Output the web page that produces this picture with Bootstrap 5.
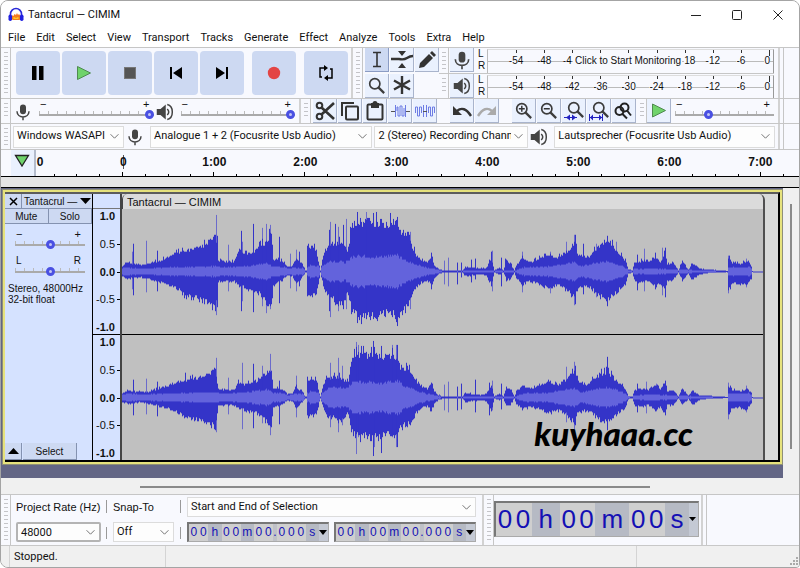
<!DOCTYPE html>
<html lang="en">
<head>
<meta charset="utf-8">
<meta name="viewport" content="width=device-width, initial-scale=1">
<title>Tantacrul — CIMIM</title>
<link href="https://cdn.jsdelivr.net/npm/bootstrap@5.3.0/dist/css/bootstrap.min.css" rel="stylesheet">
<style>
:root{--tile:#cdd9f2;--tool:#eaf1fe;--bar:#f8f9fe;--line:#c6c6c6;--ui:Roboto,"Open Sans",sans-serif;--ari:"Liberation Sans",Arial,sans-serif}
html{background:#fff}
body{font:11px/16px var(--ui);color:#111;background:#fff}
button,input,select{font:inherit;color:inherit}
button{border:0;padding:0;background:none}
svg{display:block;flex:none}
.win{border:1px solid #a4a4a4;border-radius:8px 8px 4px 8px;overflow:hidden;background:#f0f0f0}
.titlebar{height:27px;background:#fff;padding:0 15px 0 7px}
.titlebar h1{font-size:11px;line-height:16px;margin:0;font-weight:400}
.wbtns{gap:29px}
.menus{height:19px;background:#fff;padding:0 7px;gap:11px}
.menus a{color:#111;text-decoration:none;line-height:19px}
.trow{background:var(--bar);border-top:1px solid var(--line)}
.r1{height:51px}.r2{height:25px}.r3{height:26px}
.grip{flex:none;width:10px;border-right:1px solid var(--line);padding:4px 2px 4px 3px}
.grip::before{content:"";display:block;height:100%;background:repeating-linear-gradient(#c4c4c8 0 1px,transparent 1px 4px)}
.sep{border-left:2px solid #d2d2d2}
.deck{padding:0 3px 0 5px}
.keys{gap:2px}
.big{width:44px;height:44px;background:var(--tile);border-radius:4px}
.tool{width:24px;height:24px;background:var(--tool);border-right:1px solid #a9b4cc;border-bottom:1px solid #a9b4cc;flex:none}
.tool.on{background:var(--tile);border-color:#8b9cc4}
.toolgrid{display:grid;grid-template-columns:repeat(3,24px);gap:1px;padding:0 0 0 2px}
.tail{width:16px;border-left:1px solid var(--line);margin-left:3px;flex:none}
.meter{height:25px;gap:1px}
.meter + .meter{border-top:1px solid var(--line)}
.lr{font:10px/12px var(--ari);width:11px;padding-left:3px}
.scale{font:10px/12px var(--ari);padding-left:14px;margin:1px 0 0;border-left:1px solid #bbb;border-top:1px solid #ddd;border-right:1px solid #999;background:linear-gradient(#bbb,#bbb) 0 11px/100% 1px no-repeat}
.scale span{flex:1 1 0;text-align:center;position:relative;padding-top:5px}
.scale span::before{content:"";position:absolute;top:0;left:50%;width:1px;height:3px;background:#333}
.scale b{font-weight:400;background:var(--bar)}
.scale .cut-end b{margin-right:10px}
.scale .cut-start b{margin-left:10px}
.scale span:last-child{flex:0 0 18px;text-align:right;padding-right:3px}
.scale span:last-child::before{left:14px;height:6px}
.hint{position:absolute;left:86px;top:6px;padding:0 1px 0 2px;background:var(--bar);font:10px/13px var(--ari);white-space:nowrap}
.slide{font:11px/8px var(--ari);padding-top:1px}
.slide .ends{padding:0 4px 0 1px;height:8px}
input[type=range]{appearance:none;-webkit-appearance:none;display:block;width:100%;height:10px;margin:0;background:linear-gradient(#aaa,#aaa) 0 6px/100% 2px no-repeat,repeating-linear-gradient(90deg,#bbb 0 1px,transparent 1px 9px) 0 3px/100% 4px no-repeat}
input[type=range]::-webkit-slider-thumb{-webkit-appearance:none;width:9px;height:9px;border:3px solid #4a50e2;border-radius:50%;background:#c2c6f4;margin-top:2px}
.mixer{flex:none;width:284px;padding-left:1px}
.mixer svg{margin:4px 7px 0 2px}
.mixer .slide{flex:1 1 0}
.mixer input{min-width:0}
.edits{flex:none;gap:1px;padding:0 1px 0 2px}
.undo{margin-left:12px}
.speed{flex:1 1 0;min-width:0}
.devs{gap:2px;padding:0 3px 0 2px}
.form-select{background-image:url("data:image/svg+xml,%3csvg xmlns='http://www.w3.org/2000/svg' viewBox='0 0 16 16'%3e%3cpath fill='none' stroke='%23666' stroke-width='1.6' d='m1 4 7 7 7-7'/%3e%3c/svg%3e")}
.picks .form-select,.foot .form-select{font:11px/18px var(--ui);padding:0 16px 1px 3px;height:22px;border:1px solid #dcdcdc;border-radius:0;background-color:#fdfdfd;background-size:9px;background-position:right 4px center;min-width:0;color:#111}
.w-host{flex:0 0 111px}.w-rec{flex:226 1 0}.w-chan{flex:149 1 0}.w-play{flex:224 1 0}
.timeline{background:var(--bar);border-top:1px solid var(--line);border-bottom:1px solid #000;height:28px;font:bold 12px/14px var(--ari)}
.pin{width:25px;background:var(--tool);border-right:2px solid #b4bccc}
.zero{flex:none;padding:5px 0 0 1px;width:42px}
.hours{flex:none;padding-top:5px}
.hours span{flex:0 0 91px;text-align:center}
.hours span:first-child{background:linear-gradient(#555,#555) 45px 0/1px 100% no-repeat}
.strip{height:11px;background:#e4e4e4;border-bottom:1px solid #000}
.stage{min-height:0}
.lane{background:#636685;padding:2px 1px 14px 2px}
.track{border:2px solid #e6e27c;box-shadow:0 0 0 1px #8f8f78}
.inner{border-top:2px solid #5c5c5c;border-right:2px solid #000;border-bottom:2px solid #000;background:#d9dad9}
.panel{flex:0 0 88px;min-width:0;background:#d5e2ff;border-right:1px solid #000;font:10px/11px var(--ari)}
.panel button{background:var(--tile);border-right:1px solid #8492b0;border-bottom:1px solid #8492b0;height:15px}
.panel .close{width:17px;flex:none}
.panel .name{min-width:0;text-align:left;padding:0 1px 0 2px;border-right:0}
.panel .slide{width:70px;margin:5px 0 0 10px}
.panel .slide.pan{margin-top:8px}
.pan .ends{font-size:10px}
.panel .info{margin:8px 0 0 3px;white-space:nowrap}
.panel .low{height:17px}
.sel{width:54px;margin-left:1px}
.vr-col{flex:0 0 29px;background:#d5e2ff;border-right:2px solid #444;font:11px/13px var(--ari)}
.vr-head{height:15px;border-bottom:1px solid #777}
.vr-ch{flex:1 1 0;text-align:right;padding:1px 5px 0 0}
.vr-ch + .vr-ch{border-top:1px solid #000}
.vr-ch span{position:relative}
.vr-ch span::after{content:"";position:absolute;right:-5px;top:6px;width:3px;height:1px;background:#000}
.clip{border-right:2px solid #4f4f4f;border-radius:5px 6px 0 0;background:#c0c0c0;position:relative;margin-right:13px;overflow:hidden}
.cliphead{height:15px;background:#dbdbdb;font:11px/16px var(--ari);padding-left:4px;border-left:1px solid #444;border-radius:5px 0 0 0}
.wave{flex:1 1 0;min-height:0;width:100%}
.wave + .wave{border-top:1px solid #000}
.water{position:absolute;right:70px;bottom:9px;font:italic 900 33px/36px Lato,sans-serif;color:#000}
.vbar{width:16px;background:#f0f0f0;padding:16px 0 29px}
.vbar i{display:block;width:2px;height:100%;margin-left:7px;background:#8a8a8a}
.hbar{height:16px;padding:8px 149px 0 139px;background:#f0f0f0}
.hbar i{display:block;height:2px;background:#8a8a8a}
.foot{background:var(--bar);border-top:1px solid var(--line);height:51px}
.foot label{font:11px/20px var(--ari)}
.fcol{padding:2px 0 3px;gap:5px}
.fcol .form-select{height:20px;line-height:17px}
.fcol .form-select.rate{border:2px solid #b4b4b4;border-radius:2px}
.rcol{width:95px;padding-left:5px;padding-right:5px}
.scol{width:73px;padding-left:6px;padding-right:6px}
.tcol{flex:0 1 301px;padding-left:6px;padding-right:6px}
.bars{width:1px;gap:14px;padding:5px 0 6px}
.bars i{flex:1;background:#999}
.times{gap:5px}
.digits{border:1px solid #aaa;border-top:2px solid #777;border-left:2px solid #777;background:#b6bac4;color:#1410b4;font:12px/17px var(--ari);height:20px}
.digits span{background:#cfcfcf;text-align:center;flex:10 1 0;min-width:0}
.digits .u{background:#b6bac4;flex-grow:14}
.digits .d{background:#bfc1c8;flex-grow:4}
.digits button{width:9px;color:#000;flex:none;background:#c4c9d4}
.bigtime{padding:6px 2px 0 0}
.digits.huge{height:36px;width:205px;font-size:26px;line-height:33px}
.digits.huge span{flex-grow:18}
.digits.huge .u{flex-grow:28}
.digits.huge .wide{flex-grow:34}
.digits.huge .slim{flex-grow:24}
.status{height:22px;border-top:1px solid #c8c8c8;background:#f0f0f0}
.status div{line-height:22px;border-left:1px solid #d4d4d4;padding-left:4px}
.status .st1{width:156px;margin-left:8px}
.status .st3{width:163px;padding:0 0 1px}
</style>
<script src="https://cdn.jsdelivr.net/npm/bootstrap@5.3.0/dist/js/bootstrap.bundle.min.js"></script>
</head>
<body>
<svg width="0" height="0" class="position-absolute" aria-hidden="true">
<symbol id="mic" viewBox="0 0 24 24"><rect x="8" y="2" width="8" height="13" rx="4" fill="#444"/><path d="M4 11c0 10 16 10 16 0M12 18v5" fill="none" stroke="#444" stroke-width="2"/></symbol>
<symbol id="spk" viewBox="0 0 24 24"><path d="M1 8h5l7-6v20l-7-6H1z" fill="#444"/><path d="M15 8q4 4 0 8M15 2c9 2 9 18 0 20" fill="none" stroke="#444" stroke-width="2"/></symbol>
<symbol id="play" viewBox="0 0 16 16"><path d="M1.500 1.500L14.500 8L1.500 14.500z" fill="#6fd36b" stroke="#4f8a50"/></symbol>
<symbol id="lens" viewBox="0 0 20 20"><circle cx="8" cy="8" r="6" fill="none" stroke="#3c3c3c" stroke-width="2"/><path d="M12.500 12.500L19 19" stroke="#3c3c3c" stroke-width="2.600"/></symbol>
</svg>
<div class="win d-flex flex-column min-vh-100">
<header class="titlebar d-flex align-items-center">
<svg width="16" height="16" viewBox="0 0 16 16"><path d="M2.500 9V7a5.500 5.500 0 0 1 11 0v2" fill="none" stroke="#2a2ad8" stroke-width="1.600"/><path d="M3.500 11l1-3 1 1 1-2 1.500 1 1-2 1 2 1-1 1.500 2v3l-1 1H4.500z" fill="#f47b20"/><path d="M5 11l1-1 2 1 2-1 1 1-1 1H6z" fill="#ffc928"/><rect x=".5" y="7.500" width="3.500" height="6.500" rx="1.700" fill="#2020e0"/><rect x="12" y="7.500" width="3.500" height="6.500" rx="1.700" fill="#2020e0"/></svg>
<h1 class="ms-1">Tantacrul — CIMIM</h1>
<div class="wbtns d-flex ms-auto">
<button aria-label="Minimize"><svg width="13" height="12" viewBox="0 0 13 12"><path d="M2 6.500h10" stroke="#222"/></svg></button>
<button aria-label="Maximize"><svg width="12" height="12" viewBox="0 0 12 12"><rect x="1.500" y="1.500" width="9" height="9" rx="1" fill="none" stroke="#222"/></svg></button>
<button aria-label="Close"><svg width="12" height="12" viewBox="0 0 12 12"><path d="M1.500 1.500l9 9m0-9l-9 9" stroke="#222"/></svg></button>
</div>
</header>
<nav class="menus d-flex"><a href="#">File</a><a href="#">Edit</a><a href="#">Select</a><a href="#">View</a><a href="#">Transport</a><a href="#">Tracks</a><a href="#">Generate</a><a href="#">Effect</a><a href="#">Analyze</a><a href="#">Tools</a><a href="#">Extra</a><a href="#">Help</a></nav>

<div class="trow r1 d-flex">
<div class="grip"></div>
<div class="deck d-flex align-items-center gap-2">
<div class="keys d-flex">
<button class="big d-flex align-items-center justify-content-center" aria-label="Pause"><svg width="12" height="14"><path d="M0 0h4.500v14H0zM7 0h4.500v14H7z" fill="#000"/></svg></button>
<button class="big d-flex align-items-center justify-content-center" aria-label="Play"><svg width="16" height="16"><use href="#play"/></svg></button>
<button class="big d-flex align-items-center justify-content-center" aria-label="Stop"><svg width="12" height="12"><rect x=".5" y=".5" width="11" height="11" fill="#555" stroke="#777"/></svg></button>
<button class="big d-flex align-items-center justify-content-center" aria-label="Skip to start"><svg width="14" height="12"><path d="M1 0h2v12H1zM13 0v12L4 6z"/></svg></button>
<button class="big d-flex align-items-center justify-content-center" aria-label="Skip to end"><svg width="14" height="12"><path d="M11 0h2v12h-2zM1 0v12l9-6z"/></svg></button>
</div>
<button class="big d-flex align-items-center justify-content-center" aria-label="Record"><svg width="14" height="14"><circle cx="7" cy="7" r="6.200" fill="#e34545"/></svg></button>
<button class="big d-flex align-items-center justify-content-center" aria-label="Loop"><svg width="16" height="16" viewBox="0 0 16 16"><path d="M7 3H2v9h2M9 13h5V4h-2" fill="none" stroke="#000" stroke-width="1.500"/><path d="M6 0l4 3-4 3zM10 10l-4 3 4 3z"/></svg></button>
</div>
<div class="sep"></div><div class="grip"></div>
<div class="toolgrid">
<button class="tool on d-flex align-items-center justify-content-center" aria-label="Selection tool"><svg width="10" height="17"><path d="M1 1.500h8M1 15.500h8M5 1v15" stroke="#333" stroke-width="1.600" fill="none"/></svg></button>
<button class="tool d-flex align-items-center justify-content-center" aria-label="Envelope tool"><svg width="22" height="20"><path d="M7 1h8l-4 5zM7 18h8l-4-5z" fill="#333"/><path d="M0 9h8q5 1 8-1t6-2" fill="none" stroke="#333" stroke-width="2.400"/></svg></button>
<button class="tool d-flex align-items-center justify-content-center" aria-label="Draw tool"><svg width="18" height="18"><path d="M1 17l1-5L11 3l4 4-9 9zM12 2l2-2 4 4-2 2z" fill="#333"/></svg></button>
<button class="tool d-flex align-items-center justify-content-center" aria-label="Zoom tool"><svg width="17" height="17"><use href="#lens"/></svg></button>
<button class="tool d-flex align-items-center justify-content-center" aria-label="Multi-tool"><svg width="18" height="18"><path d="M9 0v18M1 4.500l16 9M17 4.500l-16 9" stroke="#333" stroke-width="2.400"/></svg></button>
</div>
<div class="flex-grow-1 d-flex flex-column">
<div class="meter d-flex"><div class="grip"></div><button class="tool d-flex align-items-center justify-content-center" aria-label="Record meter"><svg width="20" height="20"><use href="#mic"/></svg></button><div class="lr">L<br>R</div><div class="flex-grow-1 d-flex position-relative"><div class="scale d-flex flex-grow-1"><span><b>-54</b></span><span><b>-48</b></span><span class="cut-end"><b>-4</b></span><span></span><span></span><span></span><span class="cut-start"><b>18</b></span><span><b>-12</b></span><span><b>-6</b></span><span><b>0</b></span></div><div class="hint">Click to Start Monitoring</div></div></div>
<div class="meter d-flex"><div class="grip"></div><button class="tool d-flex align-items-center justify-content-center" aria-label="Playback meter"><svg width="18" height="18"><use href="#spk"/></svg></button><div class="lr">L<br>R</div><div class="scale d-flex flex-grow-1"><span><b>-54</b></span><span><b>-48</b></span><span><b>-42</b></span><span><b>-36</b></span><span><b>-30</b></span><span><b>-24</b></span><span><b>-18</b></span><span><b>-12</b></span><span><b>-6</b></span><span><b>0</b></span></div></div>
</div>
<div class="sep ms-1"></div><div class="tail"></div>
</div>

<div class="trow r2 d-flex">
<div class="grip"></div>
<div class="mixer d-flex">
<svg width="18" height="18"><use href="#mic"/></svg>
<div class="slide"><div class="ends d-flex justify-content-between"><span>−</span><span>+</span></div><input type="range" aria-label="Recording volume" value="100"></div>
<svg width="18" height="18"><use href="#spk"/></svg>
<div class="slide"><div class="ends d-flex justify-content-between"><span>−</span><span>+</span></div><input type="range" aria-label="Playback volume" value="100"></div>
</div>
<div class="sep ms-1"></div><div class="grip"></div>
<div class="edits d-flex">
<button class="tool d-flex align-items-center justify-content-center" aria-label="Cut"><svg width="20" height="20" fill="none" stroke="#333" stroke-width="2"><circle cx="4.500" cy="4.500" r="2.800"/><circle cx="4.500" cy="15.500" r="2.800"/><path d="M6.500 6.500L19 18M6.500 13.500L19 2" stroke-width="2.600"/></svg></button>
<button class="tool d-flex align-items-center justify-content-center" aria-label="Copy"><svg width="20" height="20" fill="none" stroke="#333" stroke-width="2"><path d="M2 15V2h12"/><rect x="6" y="5.500" width="12" height="13" rx="1"/></svg></button>
<button class="tool d-flex align-items-center justify-content-center" aria-label="Paste"><svg width="18" height="20" fill="none" stroke="#333" stroke-width="2"><rect x="1.500" y="3.500" width="15" height="15" rx="1"/><path d="M5 2h8v5H5z" fill="#333" stroke="none"/><circle cx="9" cy="2.500" r="1.500"/></svg></button>
<button class="tool d-flex align-items-center justify-content-center" aria-label="Trim"><svg width="20" height="14" fill="none" stroke="#6d7ce4"><path d="M5.500 1v12M15.500 1v12M7 7V3h1v9h2V2h2v10h2V4"/><path d="M1 7.500h4M16 7.500h4" stroke="#555"/></svg></button>
<button class="tool d-flex align-items-center justify-content-center" aria-label="Silence"><svg width="20" height="14" fill="none" stroke="#6d7ce4"><path d="M.5 9V3h2v9h2V3h2v6M13.500 9V3h2v9h2V3h2v6M8.500 1v12M11.500 1v12"/><path d="M8 7.500h4" stroke="#555"/></svg></button>
<button class="tool undo d-flex align-items-center justify-content-center" aria-label="Undo"><svg width="20" height="14"><path d="M5 7q7-6 14 5" fill="none" stroke="#333" stroke-width="2.400"/><path d="M1 2v9h9z" fill="#333"/></svg></button>
<button class="tool d-flex align-items-center justify-content-center" aria-label="Redo"><svg width="20" height="14"><path d="M15 7Q8 1 1 12" fill="none" stroke="#aaa" stroke-width="2.400"/><path d="M19 2v9h-9z" fill="#aaa"/></svg></button>
<button class="tool undo d-flex align-items-center justify-content-center" aria-label="Zoom in"><svg width="17" height="17" viewBox="0 0 20 20"><use href="#lens"/><path d="M4.500 8h7M8 4.500v7" stroke="#333" stroke-width="1.700"/></svg></button>
<button class="tool d-flex align-items-center justify-content-center" aria-label="Zoom out"><svg width="17" height="17" viewBox="0 0 20 20"><use href="#lens"/><path d="M4.500 8h7" stroke="#333" stroke-width="1.700"/></svg></button>
<button class="tool d-flex align-items-center justify-content-center" aria-label="Fit selection"><svg width="20" height="20"><use href="#lens" x="3" y="0" width="17" height="17"/><path d="M0 16.500h13" stroke="#2222c0"/><path d="M6 13.500v6l-4-3zM8 13.500v6l4-3z" fill="#2222c0"/></svg></button>
<button class="tool d-flex align-items-center justify-content-center" aria-label="Fit project"><svg width="20" height="20"><use href="#lens" x="3" y="0" width="17" height="17"/><path d="M.5 13v7M13.500 13v7M1 16.500h12" stroke="#2222c0"/><path d="M1 16.500l3-3v6zM13 16.500l-3-3v6z" fill="#2222c0"/></svg></button>
<button class="tool d-flex align-items-center justify-content-center" aria-label="Zoom toggle"><svg width="20" height="18" fill="none" stroke="#222" stroke-width="2"><circle cx="10.500" cy="5.500" r="4"/><circle cx="5.500" cy="9" r="4"/><path d="M8 11.500l5 5M13 8.500l4 5"/></svg></button>
</div>
<div class="grip"></div>
<button class="tool d-flex align-items-center justify-content-center" aria-label="Play at speed"><svg width="16" height="17"><use href="#play"/></svg></button>
<div class="slide speed ms-1"><div class="ends d-flex justify-content-between"><span>−</span><span>+</span></div><input type="range" aria-label="Playback speed" value="32"></div>
<div class="sep ms-1"></div><div class="tail"></div>
</div>

<div class="trow r3 picks d-flex align-items-center">
<div class="grip h-100"></div>
<div class="devs d-flex align-items-center flex-grow-1">
<select class="form-select w-host" aria-label="Audio host"><option>Windows WASAPI</option></select>
<svg width="18" height="18" class="me-1"><use href="#mic"/></svg>
<select class="form-select w-rec" aria-label="Recording device"><option>Analogue 1 + 2 (Focusrite Usb Audio)</option></select>
<select class="form-select w-chan" aria-label="Recording channels"><option>2 (Stereo) Recording Channels</option></select>
<svg width="18" height="18" class="me-1"><use href="#spk"/></svg>
<select class="form-select w-play" aria-label="Playback device"><option>Lautsprecher (Focusrite Usb Audio)</option></select>
</div>
<div class="sep h-100"></div><div class="tail h-100"></div>
</div>

<div class="timeline d-flex">
<div class="grip invisible"></div>
<button class="pin d-flex justify-content-center pt-1" aria-label="Pinned play head"><svg width="16" height="14"><path d="M1.500 1.500h13L8 12z" fill="#6fd36b" stroke="#222" stroke-width="1.300"/></svg></button>
<div class="flex-grow-1 d-flex flex-column overflow-hidden">
<div class="d-flex"><div class="zero">0</div><div class="hours d-flex" id="hours"></div></div>
<svg class="mt-auto" id="ticks" width="100%" height="5"></svg>
</div></div>
<div class="strip"></div>

<main class="stage d-flex flex-grow-1">
<div class="lane flex-grow-1 d-flex">
<div class="track flex-grow-1 d-flex"><div class="inner flex-grow-1 d-flex">
<section class="panel d-flex flex-column">
<div class="d-flex"><button class="close d-flex align-items-center justify-content-center" aria-label="Close track"><svg width="9" height="9"><path d="M1 1l7 7m0-7L1 8" stroke="#000" stroke-width="1.500"/></svg></button><button class="name flex-grow-1 d-flex align-items-center justify-content-between text-nowrap">Tantacrul —<svg width="11" height="7"><path d="M0 0h11L5.500 6z"/></svg></button></div>
<div class="d-flex"><button class="w-50">Mute</button><button class="w-50">Solo</button></div>
<div class="slide"><div class="ends d-flex justify-content-between"><span>−</span><span>+</span></div><input type="range" aria-label="Gain"></div>
<div class="slide pan"><div class="ends d-flex justify-content-between"><span>L</span><span>R</span></div><input type="range" aria-label="Pan"></div>
<div class="info">Stereo, 48000Hz<br>32-bit float</div>
<div class="d-flex mt-auto"><button class="low close d-flex align-items-center justify-content-center" aria-label="Collapse"><svg width="11" height="6"><path d="M0 6h11L5.500 0z"/></svg></button><button class="low sel">Select</button></div>
</section>
<div class="vr-col d-flex flex-column"><div class="vr-head"></div>
<div class="vr-ch d-flex flex-column justify-content-between"><b>1.0</b><span>0.5</span><span class="fw-bold">0.0</span><span>-0.5</span><b>-1.0</b></div>
<div class="vr-ch d-flex flex-column justify-content-between"><b>1.0</b><span>0.5</span><span class="fw-bold">0.0</span><span>-0.5</span><b>-1.0</b></div></div>
<section class="clip flex-grow-1 d-flex flex-column">
<div class="cliphead">Tantacrul — CIMIM</div>
<svg class="wave" id="w1" viewBox="0 0 641 126" preserveAspectRatio="none" shape-rendering="crispEdges"></svg>
<svg class="wave" id="w2" viewBox="0 0 641 126" preserveAspectRatio="none" shape-rendering="crispEdges"></svg>
<div class="water">kuyhaaa.cc</div>
</section>
</div></div></div>
<div class="vbar"><i></i></div>
</main>
<div class="hbar"><i></i></div>

<div class="foot d-flex">
<div class="grip"></div>
<div class="fcol rcol d-flex flex-column"><label for="rate" class="text-nowrap">Project Rate (Hz)</label><select id="rate" class="form-select rate"><option>48000</option></select></div>
<div class="bars d-flex flex-column"><i></i><i></i></div>
<div class="fcol scol d-flex flex-column"><label for="snap">Snap-To</label><select id="snap" class="form-select"><option>Off</option></select></div>
<div class="bars d-flex flex-column"><i></i><i></i></div>
<div class="fcol tcol d-flex flex-column"><select class="form-select" aria-label="Selection mode"><option>Start and End of Selection</option></select>
<div class="times d-flex">
<div class="digits d-flex flex-fill"><span>0</span><span>0</span><span class="u">h</span><span>0</span><span>0</span><span class="u">m</span><span>0</span><span>0</span><span class="d">.</span><span>0</span><span>0</span><span>0</span><span class="u">s</span><button class="d-flex align-items-center" aria-label="Start format"><svg width="8" height="5"><path d="M0 0h8L4 5z"/></svg></button></div>
<div class="digits d-flex flex-fill"><span>0</span><span>0</span><span class="u">h</span><span>0</span><span>0</span><span class="u">m</span><span>0</span><span>0</span><span class="d">.</span><span>0</span><span>0</span><span>0</span><span class="u">s</span><button class="d-flex align-items-center" aria-label="End format"><svg width="8" height="5"><path d="M0 0h8L4 5z"/></svg></button></div>
</div></div>
<div class="sep"></div><div class="grip"></div>
<div class="bigtime d-flex"><div class="digits huge d-flex"><span>0</span><span>0</span><span class="u">h</span><span>0</span><span>0</span><span class="u wide">m</span><span>0</span><span>0</span><span class="u slim">s</span><button class="d-flex align-items-center" aria-label="Time format"><svg width="8" height="5"><path d="M0 0h7L3.500 4z"/></svg></button></div></div>
<div class="sep"></div><div class="tail"></div>
</div>
<footer class="status d-flex"><div class="st1">Stopped.</div><div class="flex-grow-1"></div><div class="st3 d-flex align-items-end justify-content-end"><svg width="10" height="10" fill="#aaa"><path d="M7 1h2v2H7zM4 4h2v2H4zM7 4h2v2H7zM1 7h2v2H1zM4 7h2v2H4zM7 7h2v2H7z"/></svg></div></footer>
</div>
<script>
// Peak envelopes: [x, height above zero, height below zero], in columns of the clip view.
const base1=[[122,6,6],[128,9,8],[140,7,6],[150,8,8],[165,14,13],[177,20,18],[185,22,26],[195,25,27],[203,27,31],[215,37,37],[218,12,11],[224,11,10],[233,10,10],[238,20,14],[246,18,18],[256,23,20],[265,32,30],[271,40,38],[273,13,14],[282,11,9],[287,5,4],[292,6,5],[296,14,14],[302,8,6],[305,1,1],[306,1,1],[307,23,25],[311,27,25],[316,22,24],[320,1,1],[323,18,14],[327,27,25],[334,30,30],[340,30,35],[348,22,22],[351,48,42],[357,53,48],[366,53,48],[380,52,47],[387,50,43],[397,53,48],[400,43,42],[408,40,36],[412,26,25],[416,17,16],[421,12,12],[427,10,9],[431,16,15],[434,6,7],[438,3,3],[442,1,1],[462,1,1],[465,5,5],[471,4,4],[480,3,3],[486,4,4],[491,14,14],[494,1,1],[499,4,3],[503,1,1],[506,12,9],[510,9,8],[514,1,1],[516,7,7],[522,14,14],[530,10,10],[540,14,14],[550,18,18],[556,14,14],[565,20,18],[574,30,28],[578,18,16],[588,15,15],[598,26,24],[607,34,32],[612,28,26],[620,18,18],[625,11,13],[628,2,2],[632,1,1],[634,9,9],[640,11,12],[648,10,9],[655,16,16],[660,10,12],[665,20,20],[667,8,10],[673,9,9],[678,1,1],[682,11,9],[688,2,2],[692,9,9],[699,3,3],[710,2,1],[725,.5,.5],[727,.5,.5],[728,15,20],[732,9,13],[740,8,13],[747,11,14],[751,6,7],[752,.5,.5],[765,.5,.5]];
const spikes1=[[133,28,24],[132,20,18],[146,31,21],[157,21,20],[216,57,44],[217,36,36],[228,27,20],[241,41,40],[242,30,30],[253,48,41],[262,44,35],[266,48,42],[270,47,38],[279,35,32],[290,18,17],[296,22,20],[299,20,15],[330,50,46],[329,42,40],[335,48,34],[338,45,40],[343,47,38],[346,53,38],[357,60,52],[366,60,48],[373,59,48],[397,55,55],[410,40,38],[431,19,18],[444,11,13],[448,14,15],[457,9,13],[461,9,6],[471,12,11],[475,13,8],[489,12,11],[491,20,15],[492,21,20],[501,14,15],[505,13,5],[522,20,21],[550,20,22],[566,30,18],[574,37,34],[575,37,33],[583,28,23],[596,28,26],[607,36,35],[616,30,22],[637,17,19],[644,23,20],[655,19,18],[662,24,24],[665,24,26],[728,16,22],[746,13,16]];
const base2=base1.map(([x,u,d])=>{const k=x<218?.82:x<330?.78:x<350?.72:x<400?.85:x<412?.75:x<516?.95:x<600?.92:x<630?.8:.85;return[x,u*k,d*k]});
const spikes2=[[133,18,18],[146,19,17],[157,16,19],[185,25,20],[216,40,35],[228,20,17],[242,35,32],[253,34,31],[262,32,26],[270,44,38],[279,17,27],[296,22,20],[330,35,30],[338,40,35],[342,32,28],[356,56,57],[358,53,40],[373,57,59],[374,50,50],[381,52,56],[392,53,40],[396,53,50],[397,53,50],[407,32,30],[431,15,14],[444,13,13],[448,16,15],[457,11,13],[461,14,12],[475,18,15],[489,15,18],[492,17,13],[501,14,12],[566,31,25],[574,36,32],[575,32,28],[607,41,33],[646,16,16],[637,14,15],[656,14,14],[664,14,12],[728,15,22],[746,12,15]];
const rms=[[122,4],[145,3],[170,4],[215,5],[220,4],[245,5],[267,8],[272,5],[305,3],[310,6],[322,5],[330,10],[345,9],[352,14],[360,15],[380,14],[397,16],[405,11],[415,7],[425,4],[436,2],[444,1],[515,1],[524,4],[550,5],[574,9],[580,5],[596,8],[607,10],[620,6],[628,2],[650,3],[700,1],[728,4],[751,4],[765,0]];
function lerp(t,x,i){let k=1;while(k<t.length-1&&t[k][0]<x)k++;const a=t[k-1],b=t[k],f=Math.min(1,Math.max(0,(x-a[0])/(b[0]-a[0])));return a[i]+(b[i]-a[i])*f}
function draw(id,base,spikes,seed){
  const rnd=()=>(seed=(seed*16807)%2147483647)/2147483647,at=new Map(spikes.map(s=>[s[0],s]));
  let peak="",core="",soft="";
  for(let x=122;x<763;x++){
    const n=rnd(),j=n>.88?1.15:.85+n*.2;
    let u=Math.min(61,lerp(base,x,1)*j),d=Math.min(61,lerp(base,x,2)*(rnd()*.25+.85));
    const s=at.get(x),px=x-122+.5;
    if(s){if(x%2===0)soft+=`M${px} ${63-s[1]}V${63+s[2]}`;else{u=s[1];d=s[2]}}
    peak+=x>752?`M${px} 63v1`:`M${px} ${63-Math.max(.5,Math.round(u))}V${63+Math.max(.5,Math.round(d))}`;
    const r=Math.min(lerp(rms,x,1)*(.9+rnd()*.25),u*.6);
    if(r>.8)core+=`M${px} ${63-Math.round(r)}V${63+Math.round(r)}`;
  }
  document.getElementById(id).innerHTML=`<path d="${soft}" stroke="#6a6acb"/><path d="${peak}" stroke="#3232c8"/><path d="${core}" stroke="#6464dc"/>`;
}
draw("w1",base1,spikes1,77);draw("w2",base2,spikes2,4021);
document.getElementById("hours").innerHTML=[0,1,2,3,4,5,6,7].map(m=>`<span>${m?m+":00":0}</span>`).join("");
let t="";for(let i=-3;i<60;i++){const x=Math.round(86+i*22.8)+.5;t+=`M${x} ${i%4?3:1}V5`}
document.getElementById("ticks").innerHTML=`<path d="${t}" stroke="#000"/>`;
</script>
</body>
</html>
